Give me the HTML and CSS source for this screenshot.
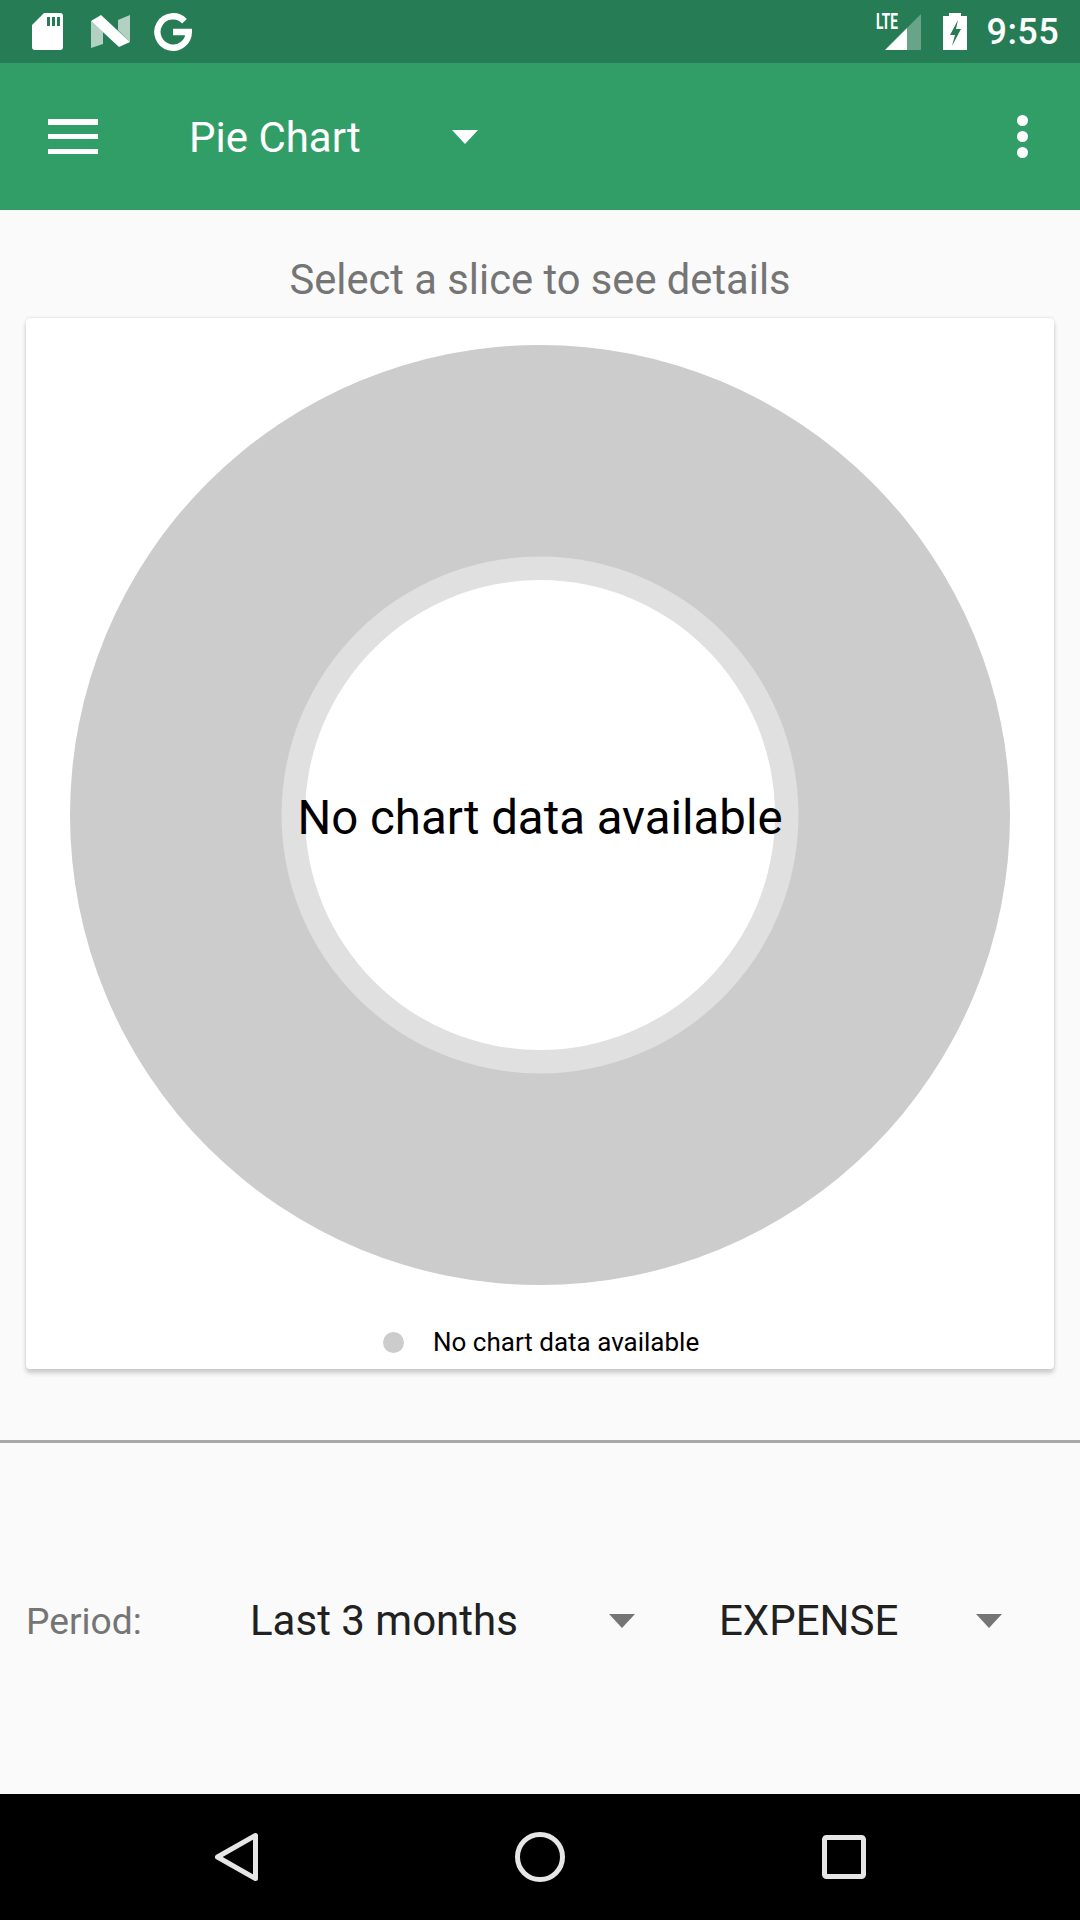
FILE: index.html
```html
<!DOCTYPE html>
<html lang="en">
<head>
<meta charset="utf-8">
<title>Pie Chart</title>
<link rel="stylesheet" href="styles.css">
</head>
<body>
<div class="screen">
  <header class="status">
    <div class="status-left">
      <svg class="ic-sd" viewBox="0 0 31 37"><path fill="#fff" fill-rule="evenodd" d="M12 0H28a3 3 0 0 1 3 3V34a3 3 0 0 1-3 3H3a3 3 0 0 1-3-3V12ZM15 4V13H18V4ZM20 4V13H23V4ZM25 4V13H28V4Z"/></svg>
      <svg class="ic-n" viewBox="0 0 39 33"><path fill="#fff" fill-opacity=".65" d="M0 6 12 17V29L0 33ZM27 5 39 0V27L27 15Z"/><path fill="#fff" d="M0 6 10 0 39 27 28 32Z"/></svg>
      <svg class="ic-g" viewBox="0 0 38 38"><path fill="none" stroke="#fff" stroke-width="6.4" d="M30.5 8.2A15.7 15.7 0 1 0 34.8 19H19"/></svg>
    </div>
    <div class="status-right">
      <div class="signal">
        <span class="lte">LTE</span>
        <svg class="ic-signal" viewBox="0 0 36 36"><path fill="#fff" fill-opacity=".3" d="M36 0V36H22V14Z"/><path fill="#fff" d="M22 14V36H0Z"/></svg>
      </div>
      <svg class="ic-battery" viewBox="0 0 24 37"><path fill="#fff" fill-rule="evenodd" d="M6 0H18V3H24V37H0V3H6ZM15 7 7 22H12L9 33 18 16H13Z"/></svg>
      <span class="clock">9:55</span>
    </div>
  </header>

  <nav class="toolbar">
    <div class="menu-icon"><i></i><i></i><i></i></div>
    <span class="toolbar-title">Pie Chart</span>
    <span class="caret caret-white"></span>
    <div class="more"><i></i><i></i><i></i></div>
  </nav>

  <main class="content">
    <p class="hint">Select a slice to see details</p>
    <section class="card">
      <div class="chart">
        <svg class="pie" viewBox="0 0 940 940">
          <circle cx="470" cy="470" r="470" fill="#cccccc"/>
          <circle cx="470" cy="470" r="258.500" fill="#e0e0e0"/>
          <circle cx="470" cy="470" r="235" fill="#ffffff"/>
        </svg>
        <span class="center-text">No chart data available</span>
      </div>
      <div class="legend">
        <span class="legend-dot"></span>
        <span class="legend-text">No chart data available</span>
      </div>
    </section>
    <hr class="divider">
    <div class="filters">
      <span class="period-label">Period:</span>
      <span class="select-value value-period">Last 3 months</span>
      <span class="caret caret-grey caret-period"></span>
      <span class="select-value value-type">EXPENSE</span>
      <span class="caret caret-grey"></span>
    </div>
  </main>

  <footer class="navbar">
    <svg class="ic-back" viewBox="0 0 44 50"><path fill="none" stroke="#e6e6e6" stroke-width="5" stroke-linejoin="round" d="M40.500 3.500V46.500L2.500 25Z"/></svg>
    <svg class="ic-home" viewBox="0 0 50 50"><circle cx="25" cy="25" r="22.500" fill="none" stroke="#e6e6e6" stroke-width="5"/></svg>
    <svg class="ic-recent" viewBox="0 0 44 44"><rect x="2.500" y="2.500" width="39" height="39" rx="2" fill="none" stroke="#e6e6e6" stroke-width="5"/></svg>
  </footer>
</div>
</body>
</html>
```

FILE: styles.css
```css
* { box-sizing: border-box; }
html, body { margin: 0; padding: 0; }
body { font-family: Roboto, "Noto Sans", sans-serif; background: #fafafa; }
svg { display: block; flex: none; }

.screen { width: 1080px; height: 1920px; display: flex; flex-direction: column; overflow: hidden; }

.status { height: 63px; flex: none; background: #267d55; display: flex; justify-content: space-between; align-items: center; padding: 0 21px 0 32px; }
.status-left { display: flex; align-items: center; }
.ic-sd { width: 31px; height: 37px; }
.ic-n { width: 39px; height: 33px; margin-left: 28px; }
.ic-g { width: 38px; height: 38px; margin-left: 24px; }
.status-right { display: flex; align-items: center; }
.signal { position: relative; width: 36px; height: 36px; }
.ic-signal { width: 36px; height: 36px; }
.lte { position: absolute; left: -9px; top: -2px; font-size: 22px; font-weight: 700; color: #fff; transform: scaleX(.62); transform-origin: left top; line-height: 20px; }
.ic-battery { width: 24px; height: 37px; margin-left: 22px; }
.clock { margin-left: 20px; font-size: 36px; font-weight: 500; color: #fff; line-height: 40px; letter-spacing: .4px; }

.toolbar { height: 147px; flex: none; background: #329e67; display: flex; align-items: center; padding: 0 0 0 48px; color: #fff; }
.menu-icon { width: 50px; height: 35px; display: flex; flex-direction: column; justify-content: space-between; }
.menu-icon i { display: block; height: 5.500px; background: #fff; }
.toolbar-title { margin-left: 91px; font-size: 42px; line-height: 48px; padding-top: 3px; }
.caret { display: block; width: 0; height: 0; flex: none; border-style: solid; border-width: 14px 13.500px 0; border-color: transparent; }
.caret-white { margin-left: 91px; border-top-color: #fff; }
.more { margin-left: auto; margin-right: 52px; display: flex; flex-direction: column; gap: 5px; }
.more i { display: block; width: 11px; height: 11px; border-radius: 50%; background: #fff; }

.content { flex: 1; display: flex; flex-direction: column; }
.hint { margin: 0; height: 108px; padding-top: 46px; text-align: center; font-size: 41.700px; line-height: 47px; color: #757575; }
.card { margin: 0 26px; height: 1051px; background: #fff; border-radius: 4px; box-shadow: 0 4px 5px rgba(0,0,0,.2), 0 -1px 2px rgba(0,0,0,.08); padding-top: 27px; display: flex; flex-direction: column; align-items: center; }
.chart { position: relative; width: 940px; height: 940px; display: flex; align-items: center; justify-content: center; }
.pie { width: 940px; height: 940px; }
.center-text { position: absolute; left: 0; right: 0; top: 445px; text-align: center; font-size: 47.400px; line-height: 56px; color: #000; }
.legend { margin-top: 42px; display: flex; align-items: center; align-self: flex-start; margin-left: 357px; }
.legend-dot { width: 21px; height: 21px; border-radius: 50%; background: #cccccc; }
.legend-text { margin-left: 29px; font-size: 26px; line-height: 30px; color: #000; }
.divider { margin: 71px 0 0; height: 3px; border: 0; background: #a9a9a9; flex: none; }
.filters { flex: 1; display: flex; align-items: center; padding: 0 0 0 26px; margin-top: 5px; }
.period-label { width: 224px; font-size: 37.200px; color: #757575; }
.select-value { font-size: 42px; color: #212121; line-height: 48px; }
.value-period { width: 359px; }
.value-type { margin-left: 84px; width: 257px; }
.caret-grey { border-top-color: #757575; }

.navbar { height: 126px; flex: none; background: #000; position: relative; display: flex; align-items: center; padding-left: 215px; }
.ic-back { width: 44px; height: 50px; }
.ic-home { width: 50px; height: 50px; margin-left: 256px; }
.ic-recent { width: 44px; height: 44px; margin-left: 257px; }
```
